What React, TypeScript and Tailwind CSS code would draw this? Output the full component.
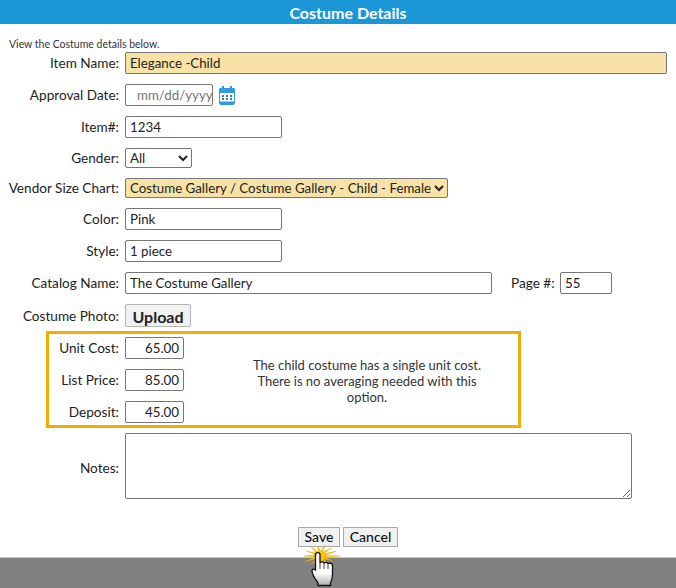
const inputClass =
  "h-[22px] rounded-[2px] border border-[#767676] bg-white px-[4px] pb-[1px] text-[13.3px] text-[#222] outline-none";

const Row = ({ label, className = "", children }: { label: string; className?: string; children: React.ReactNode }) => (
  <div className={`flex items-center ${className}`}>
    <label className="w-[119px] shrink-0 text-right text-[13.6px] leading-[22px] text-[#222] whitespace-nowrap">{label}</label>
    <div className="ml-[6px] flex items-center">{children}</div>
  </div>
);

const CalendarIcon = () => (
  <svg width="16" height="19" viewBox="0 0 16 19" className="ml-[6px]">
    <rect x="0.5" y="2.5" width="15" height="16" rx="1.5" fill="#fff" stroke="#2f9be0" />
    <rect x="0" y="2" width="16" height="5" rx="1.5" fill="#2f9be0" />
    <rect x="3" y="0" width="2" height="4" fill="#2f9be0" />
    <rect x="11" y="0" width="2" height="4" fill="#2f9be0" />
    <path
      d="M3 9h2v2H3zM7 9h2v2H7zM11 9h2v2h-2zM3 12h2v2H3zM7 12h2v2H7zM11 12h2v2h-2z"
      fill="#2f7fc0"
    />
    <rect x="1" y="15.5" width="14" height="2.5" fill="#2f9be0" />
  </svg>
);

// burst rays as [angle in degrees, length]
const rays = [
  [0, 20], [25, 14], [50, 12], [75, 13], [100, 14], [130, 13], [155, 17], [180, 16],
  [205, 15], [232, 15], [262, 13], [290, 15], [318, 15], [340, 17],
];
const burstPoints = rays
  .flatMap(([a, len]) => {
    const r = (a * Math.PI) / 180;
    const m = r + (Math.PI * 12.5) / 180;
    return [
      `${(24 + Math.cos(r) * len).toFixed(1)},${(18 + Math.sin(r) * len * 0.8).toFixed(1)}`,
      `${(24 + Math.cos(m) * 4.5).toFixed(1)},${(18 + Math.sin(m) * 4.5).toFixed(1)}`,
    ];
  })
  .join(" ");

const HandCursor = () => (
  <svg width="50" height="50" viewBox="0 0 50 50" className="absolute left-[296px] top-[538px]">
    <defs>
      <linearGradient id="handFill" x1="0" y1="0" x2="0" y2="1">
        <stop offset="0.6" stopColor="#fff" />
        <stop offset="1" stopColor="#b0b0b0" />
      </linearGradient>
    </defs>
    <polygon points={burstPoints} fill="#f5c211" stroke="#e0a800" strokeWidth="0.4" />
    <path
      d="M19.5 16.5c0-2.5 4.5-2.5 4.5 0V25c.5-1.5 4-1.5 4 .5c.5-1.5 4-1.5 4 .5c.5-1.5 4.5-1 4.5 1.5V37c0 4-1 6-2 8v2.5H22V45c-2-3-6-8-6-12c0-2 2-2.5 3.5-1z"
      fill="url(#handFill)"
      stroke="#111"
      strokeWidth="1.3"
    />
    <path d="M24 25v6M28 25.5v5.5M32 26v5" stroke="#111" strokeWidth="0.8" fill="none" />
  </svg>
);

export default function App() {
  return (
    <div className="relative flex h-[588px] w-[676px] flex-col overflow-hidden bg-white font-['Lato',sans-serif] text-[#222]">
      <div className="h-[24px] bg-[#1b96d6] pl-[20px] text-center text-[16px] font-bold leading-[25px] text-white">
        Costume Details
      </div>

      <div className="flex flex-1 flex-col">
        <p className="ml-[9px] mt-[14px] h-[14px] text-[10.5px] leading-[13px] text-[#333]">View the Costume details below.</p>

        <Row label="Item Name:">
          <input readOnly value="Elegance -Child" className={`${inputClass} w-[542px] !bg-[#f9e2a6]`} />
        </Row>
        <Row label="Approval Date:" className="mt-[10px]">
          <input readOnly placeholder="mm/dd/yyyy" className={`${inputClass} w-[88px] !pl-[11px] !pr-0 placeholder:text-[#757575]`} />
          <CalendarIcon />
        </Row>
        <Row label="Item#:" className="mt-[10px]">
          <input readOnly value="1234" className={`${inputClass} w-[157px]`} />
        </Row>
        <Row label="Gender:" className="mt-[10px] h-[20px]">
          <select className="h-[20px] w-[67px] rounded-[2px] border border-[#767676] bg-white text-[13.3px] text-[#222]">
            <option>All</option>
          </select>
        </Row>
        <Row label="Vendor Size Chart:" className="mt-[10px] h-[20px]">
          <select className="h-[20px] w-[323px] rounded-[2px] border border-[#767676] bg-[#f9e2a6] text-[13.3px] text-[#222]">
            <option>Costume Gallery / Costume Gallery - Child - Female</option>
          </select>
        </Row>
        <Row label="Color:" className="mt-[10px]">
          <input readOnly value="Pink" className={`${inputClass} w-[157px]`} />
        </Row>
        <Row label="Style:" className="mt-[10px]">
          <input readOnly value="1 piece" className={`${inputClass} w-[157px]`} />
        </Row>
        <Row label="Catalog Name:" className="mt-[10px]">
          <input readOnly value="The Costume Gallery" className={`${inputClass} w-[367px]`} />
          <span className="ml-[19px] w-[43px] whitespace-nowrap text-[13.6px] leading-[22px]">Page #:</span>
          <input readOnly value="55" className={`${inputClass} ml-[6px] w-[52px]`} />
        </Row>
        <Row label="Costume Photo:" className="mt-[10px] h-[23px]">
          <button className="h-[23px] w-[66px] rounded-[2px] border border-[#b5b5b5] bg-[#f1f1f1] pb-[2px] text-[16px] font-bold text-[#222]">
            Upload
          </button>
        </Row>

        <div className="ml-[46px] mt-[4px] flex h-[97px] w-[475px] border-[3px] border-[#f2ae00]">
          <div className="flex flex-col pt-[3px]">
            {[
              ["Unit Cost:", "65.00"],
              ["List Price:", "85.00"],
              ["Deposit:", "45.00"],
            ].map(([label, value], i) => (
              <div key={label} className={`flex items-center ${i > 0 ? "mt-[10px]" : ""}`}>
                <label className="w-[70px] text-right text-[13.6px] leading-[22px]">{label}</label>
                <input readOnly value={value} className={`${inputClass} ml-[6px] w-[59px] text-right`} />
              </div>
            ))}
          </div>
          <p className="ml-[63px] mt-[23px] w-[240px] text-center text-[13px] leading-[16px] text-[#333]">
            The child costume has a single unit cost. There is no averaging needed with this option.
          </p>
        </div>

        <Row label="Notes:" className="mt-[5px] [&>label]:pt-[4px]">
          <textarea readOnly className="block h-[66px] w-[507px] rounded-[2px] border border-[#767676] bg-white outline-none" />
        </Row>

        <div className="mt-[28px] flex justify-center gap-[3px] pl-[20px]">
          <button className="h-[20px] w-[42px] border border-[#a8a8a8] bg-[#f1f1f1] text-[14px] font-medium leading-[16px] text-[#111]">
            Save
          </button>
          <button className="h-[20px] w-[55px] border border-[#a8a8a8] bg-[#f1f1f1] text-[14px] font-medium leading-[16px] text-[#111]">
            Cancel
          </button>
        </div>

        <div className="mt-[10px] flex-1 border-t border-[#c4c4c4] bg-[#808080]" />
      </div>

      <HandCursor />
    </div>
  );
}
